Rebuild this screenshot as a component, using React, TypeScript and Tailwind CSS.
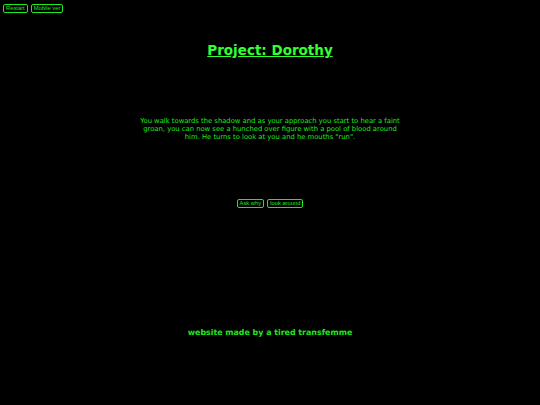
import React from 'react';

const btn = 'rounded-[2px] border border-[#1ee81e] px-[2px] text-[5.8px] leading-[7px] text-[#1ee81e]';

export default function App() {
    return (
        <div className="min-h-[405px] w-full bg-black text-[#1ee81e]" style={{ fontFamily: '"DejaVu Sans", Verdana, sans-serif' }}>
            <div className="flex gap-[3px] px-[3px] pt-[4px]" style={{ fontFamily: '"Liberation Sans", Arial, sans-serif' }}>
                <button className={btn}>Restart</button>
                <button className={btn}>Mobile ver</button>
            </div>

            <h1 className="mt-[29px] text-center text-[13.5px] font-bold leading-[16px] text-[#33ff33] underline">Project: Dorothy</h1>

            <p className="mx-auto mt-[59px] w-[266px] text-center text-[6.8px] leading-[8px]">
                You walk towards the shadow and as your approach you start to hear a faint groan, you can now see a hunched over figure with a pool of blood around him. He turns to look at you and he mouths "run".
            </p>

            <div className="mt-[58px] flex justify-center gap-[3px]" style={{ fontFamily: '"Liberation Sans", Arial, sans-serif' }}>
                <button className={btn}>Ask why</button>
                <button className={btn}>look around</button>
            </div>

            <h3 className="mt-[120px] text-center text-[7.9px] font-bold leading-[10px]">website made by a tired transfemme</h3>
        </div>
    );
}
